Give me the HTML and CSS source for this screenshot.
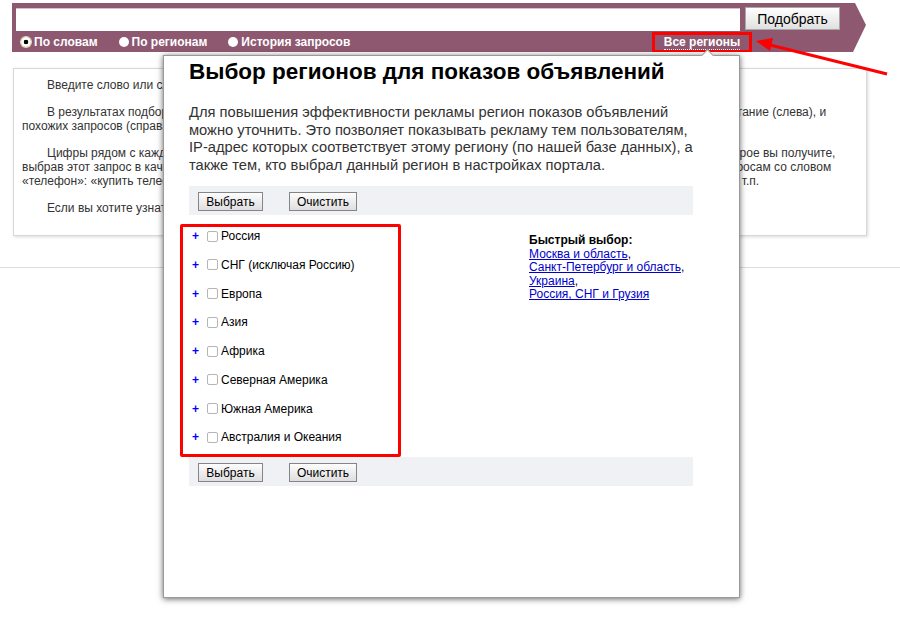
FILE: index.html
```html
<!DOCTYPE html>
<html lang="ru">

<head>
    <meta charset="UTF-8">
    <meta name="viewport" content="width=device-width, initial-scale=1.0">
    <title>Подбор слов</title>
    <link rel="stylesheet" href="styles.css">
</head>

<body>
<div class="search">
    <div class="search_row">
        <input class="search_input" type="text">
        <button class="search_btn">Подобрать</button>
    </div>
    <div class="mode">
        <span class="mode_item"><i class="radio checked"></i>По словам</span>
        <span class="mode_item"><i class="radio"></i>По регионам</span>
        <span class="mode_item"><i class="radio"></i>История запросов</span>
        <a href="javascript:;" class="regions_link"><span>Все регионы</span></a>
    </div>
</div>

<div class="info">
    <p>Введите слово или словосочетание, характеризующее вашу тематику, и нажмите кнопку «Подобрать».</p>
    <p>В результатах подбора будет приведена статистика запросов в Яндексе, включающих заданное вами слово или словосочетание (слева), и<br>похожих запросов (справа).</p>
    <p>Цифры рядом с каждым запросом в результатах подбора слов дают предварительный прогноз числа показов в месяц, которое вы получите,<br>выбрав этот запрос в качестве ключевого слова. Например, запись «телефон 14 598 763» в левой колонке означает, что по запросам со словом<br>«телефон»: «купить телефон», «телефон сотовый», «сотовый телефон», «телефон для бабушки», «телефонный справочник» и т.п.</p>
    <p>Если вы хотите узнать, сколько раз искали ваше слово в определенном регионе, выберите нужный регион.</p>
</div>
<div class="line"></div>

<!-- окно выбора регионов -->
<div class="popup">
    <h1>Выбор регионов для показов объявлений</h1>
    <p class="popup_text">Для повышения эффективности рекламы регион показов объявлений<br>можно уточнить. Это позволяет показывать рекламу тем пользователям,<br>IP-адрес которых соответствует этому региону (по нашей базе данных), а<br>также тем, кто выбрал данный регион в настройках портала.</p>
    <div class="toolbar">
        <button class="btn_ok">Выбрать</button>
        <button class="btn_clear">Очистить</button>
    </div>
    <div class="regions">
        <ul class="tree">
            <li><span class="plus">+</span><i class="check"></i>Россия</li>
            <li><span class="plus">+</span><i class="check"></i>СНГ (исключая Россию)</li>
            <li><span class="plus">+</span><i class="check"></i>Европа</li>
            <li><span class="plus">+</span><i class="check"></i>Азия</li>
            <li><span class="plus">+</span><i class="check"></i>Африка</li>
            <li><span class="plus">+</span><i class="check"></i>Северная Америка</li>
            <li><span class="plus">+</span><i class="check"></i>Южная Америка</li>
            <li><span class="plus">+</span><i class="check"></i>Австралия и Океания</li>
        </ul>
        <div class="quick">
            <b>Быстрый выбор:</b><br>
            <a href="javascript:;">Москва и область</a>,<br>
            <a href="javascript:;">Санкт-Петербург и область</a>,<br>
            <a href="javascript:;">Украина</a>,<br>
            <a href="javascript:;">Россия, СНГ и Грузия</a>
        </div>
    </div>
    <div class="toolbar">
        <button class="btn_ok">Выбрать</button>
        <button class="btn_clear">Очистить</button>
    </div>
</div>

<!-- стрелка-указатель -->
<svg class="arrow" width="900" height="100" viewBox="0 0 900 100">
    <line x1="770" y1="45" x2="887" y2="74" stroke="#f00" stroke-width="3"/>
    <polygon points="756,41 773,38 770,51" fill="#f00"/>
</svg>
</body>

</html>
```

FILE: styles.css
```css
* {
    margin: 0;
    padding: 0;
    box-sizing: border-box;
}

body {
    position: relative;
    width: 900px;
    height: 624px;
    overflow: hidden;
    background: #fff;
    font-family: "Liberation Sans", Arial, sans-serif;
    font-size: 12px;
    color: #333;
}

/* верхняя панель поиска */
.search {
    width: 854px;
    height: 49px;
    margin: 3px 0 0 12px;
    background: #8e5870;
    clip-path: polygon(0 0, 843px 0, 854px 22px, 841px 49px, 0 49px);
}

.search_row {
    display: flex;
    align-items: flex-start;
    height: 29px;
    padding: 4px 0 0 4px;
}

.search_input {
    width: 724px;
    height: 23px;
    margin-top: 1px;
    border: 0;
    border-top: 1px solid #cfc3c8;
    background: #fff;
}

.search_btn {
    width: 95px;
    height: 23px;
    margin-left: 5px;
    font: 14px "Liberation Sans", Arial, sans-serif;
    color: #000;
    background: linear-gradient(#fefefe, #e0e0e0);
    border: 1px solid #a8a8a8;
}

.mode {
    display: flex;
    align-items: center;
    height: 20px;
    padding-left: 9px;
    color: #fff;
    font-weight: bold;
}

.mode_item {
    display: flex;
    align-items: center;
    margin-right: 21px;
}

.radio {
    width: 10px;
    height: 10px;
    margin-right: 3px;
    border-radius: 50%;
    background: #fff;
}

.radio.checked {
    background: radial-gradient(circle, #000 0 2px, #fff 2.6px);
    box-shadow: 0 0 0 1px #e9dca8;
}

.regions_link {
    width: 100px;
    height: 21px;
    margin-left: auto;
    margin-right: 114px;
    border: 3px solid #f00;
    text-align: center;
    line-height: 15px;
    color: #fff;
    text-decoration: none;
}

.regions_link span {
    border-bottom: 1px dotted #fff;
}

/* блок с подсказками */
.info {
    width: 854px;
    height: 168px;
    margin: 16px 0 0 13px;
    padding: 9px 30px 0 8px;
    border: 1px solid #d8d8d8;
    box-shadow: 1px 1px 3px rgba(0, 0, 0, .15);
    line-height: 14px;
}

.info p {
    margin-bottom: 13px;
    text-indent: 25px;
    white-space: nowrap;
}

.line {
    height: 1px;
    margin-top: 31px;
    background: #ddd;
}

/* окно выбора регионов */
.popup {
    position: absolute;
    left: 163px;
    top: 55px;
    width: 577px;
    height: 543px;
    padding: 3px 0 0 25px;
    background: #fff;
    border: 1px solid #999;
    box-shadow: 0 1px 6px rgba(0, 0, 0, .6);
    color: #333;
}

.popup::before {
    content: "";
    position: absolute;
    left: 539px;
    top: -5px;
    width: 8px;
    height: 8px;
    background: #fff;
    border-top: 1px solid #999;
    border-left: 1px solid #999;
    transform: rotate(45deg);
}

.popup h1 {
    font-size: 22.5px;
    line-height: 26px;
    color: #000;
}

.popup_text {
    margin-top: 19px;
    font-size: 14.7px;
    line-height: 17.5px;
}

.toolbar {
    display: flex;
    gap: 26px;
    width: 504px;
    height: 29px;
    margin-top: 12px;
    padding: 6px 0 0 9px;
    background: #f0f1f4;
}

.regions + .toolbar {
    margin-top: 0;
}

.toolbar button {
    height: 19px;
    font: 12px "Liberation Sans", Arial, sans-serif;
    color: #000;
    background: linear-gradient(#fdfdfd, #dedede);
    border: 1px solid #858585;
}

.btn_ok {
    width: 65px;
}

.btn_clear {
    width: 68px;
}

.regions {
    display: flex;
    align-items: flex-start;
    margin: 9px 0 0 -9px;
}

.tree {
    display: flex;
    flex-direction: column;
    gap: 10.75px;
    width: 221px;
    height: 233px;
    padding-left: 9px;
    border: 3px solid #f00;
    border-radius: 2px;
    list-style: none;
}

.tree li {
    display: flex;
    align-items: center;
    height: 18px;
    color: #000;
}

.plus {
    width: 15px;
    color: #00f;
    font-weight: bold;
}

.check {
    width: 11px;
    height: 11px;
    margin-right: 3px;
    border: 1px solid #b5b5b5;
    border-radius: 2px;
}

.quick {
    margin: 10px 0 0 128px;
    line-height: 13.6px;
    color: #000;
}

.quick a {
    color: #00c;
}

.arrow {
    position: absolute;
    left: 0;
    top: 0;
}
```
